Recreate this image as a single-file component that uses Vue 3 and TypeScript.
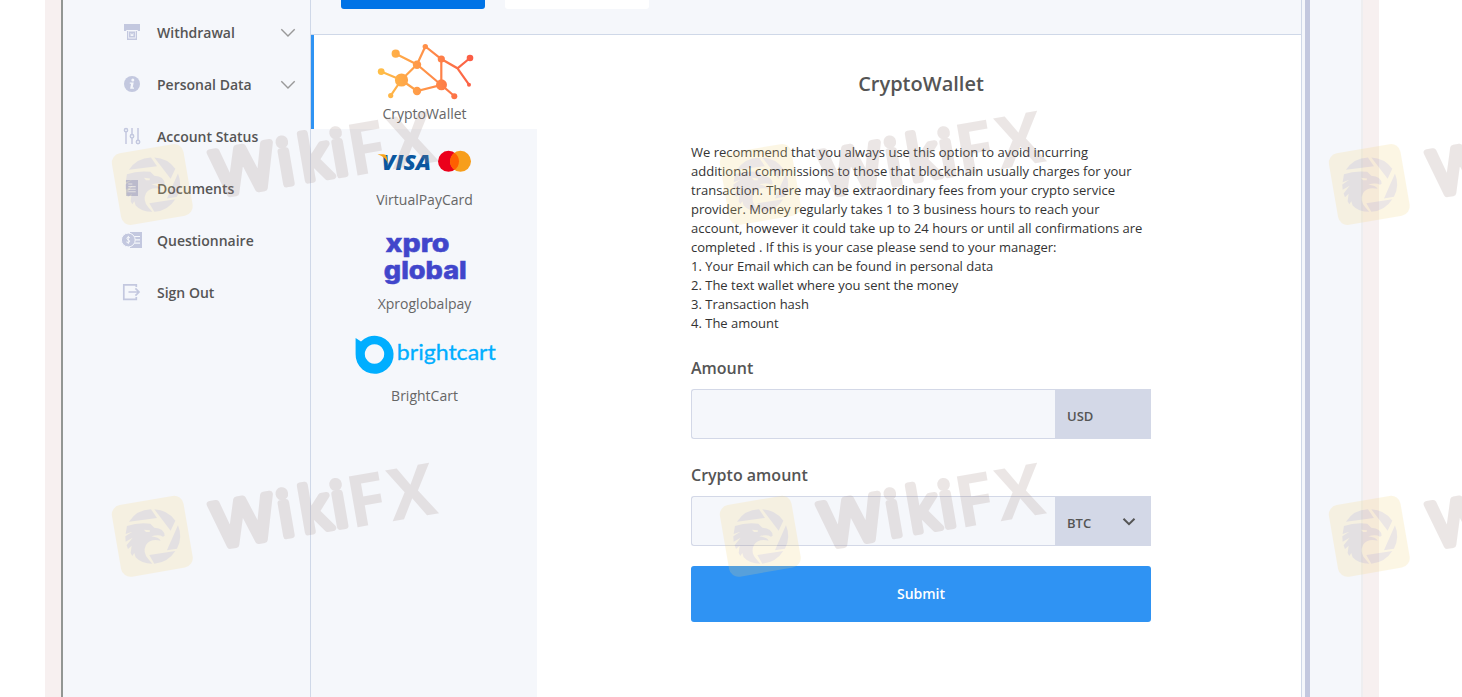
<script setup lang="ts">
interface NavItem { label: string; icon: string; expandable?: boolean }
interface Method { label: string; key: string; viewBox: string; height: number }

const nav: NavItem[] = [
  { label: 'Withdrawal', icon: 'atm', expandable: true },
  { label: 'Personal Data', icon: 'info', expandable: true },
  { label: 'Account Status', icon: 'sliders' },
  { label: 'Documents', icon: 'doc' },
  { label: 'Questionnaire', icon: 'quest' },
  { label: 'Sign Out', icon: 'exit' },
]

const methods: Method[] = [
  { label: 'CryptoWallet', key: 'crypto', viewBox: '314 35 223 69', height: 69 },
  { label: 'VirtualPayCard', key: 'card', viewBox: '314 129 223 61', height: 61 },
  { label: 'Xproglobalpay', key: 'xpro', viewBox: '314 215 223 79', height: 79 },
  { label: 'BrightCart', key: 'bright', viewBox: '314 319 223 67', height: 67 },
]

const notes: string[] = [
  'We recommend that you always use this option to avoid incurring',
  'additional commissions to those that blockchain usually charges for your',
  'transaction. There may be extraordinary fees from your crypto service',
  'provider. Money regularly takes 1 to 3 business hours to reach your',
  'account, however it could take up to 24 hours or until all confirmations are',
  'completed . If this is your case please send to your manager:',
  '1. Your Email which can be found in personal data',
  '2. The text wallet where you sent the money',
  '3. Transaction hash',
  '4. The amount',
]

const marks = [152.3, 760.3, 1369.3].flatMap((x) => [184.5, 536.3].map((y) => ({ x, y })))
</script>

<template>
  <div class="page">
    <div class="strip left"></div>
    <aside class="sidebar">
      <div v-for="item in nav" :key="item.label" class="nav-item">
        <svg class="nav-icon" width="22" height="18" viewBox="0 0 22 18">
          <g v-if="item.icon === 'atm'" fill="#c3c8df">
            <path d="M3 1h16v7h-2.200V7H5.200v1H3z" />
            <path fill-rule="evenodd" d="M6 8h10v9H6zM7.300 8v7.600h7.400V8z" />
            <path fill-rule="evenodd" d="M8 8.600h6v5.800H8zM9.600 10v3h2.800v-3z" />
            <path d="M10.200 9.600h1.600v1.600h-1.600z" />
          </g>
          <g v-else-if="item.icon === 'info'">
            <circle cx="11" cy="9" r="8" fill="#c3c8df" />
            <circle cx="11.800" cy="5" r="1.500" fill="#f5f7fb" />
            <path d="M8.800 7.400h3.900l-1 5h1.300v1.300H9.100l1-5H8.800z" fill="#f5f7fb" />
          </g>
          <g v-else-if="item.icon === 'sliders'" fill="none" stroke="#c3c8df" stroke-width="1.500">
            <path d="M5 5v12M11 1v6.500M11 11v6M17 1v12" />
            <circle cx="5" cy="3.200" r="1.600" /><circle cx="11" cy="9.200" r="1.700" /><circle cx="17" cy="15" r="1.700" />
          </g>
          <g v-else-if="item.icon === 'doc'">
            <path d="M5 1h12v16H5z" fill="#c3c8df" />
            <path d="M7.300 5h4M7.300 7.600h7.400M7.300 10.200h7.400M7.300 12.800h7.400" stroke="#f5f7fb" stroke-width="1.100" />
          </g>
          <g v-else-if="item.icon === 'quest'">
            <path d="M9 1h12v16H9z" fill="#c3c8df" />
            <path d="M12 5.500h7M12 8.800h7M12 12.200h7" stroke="#f5f7fb" stroke-width="1.200" />
            <circle cx="7.300" cy="9" r="6.900" fill="#c3c8df" stroke="#f5f7fb" stroke-width="1" />
            <path d="M9 6.900Q7.300 5.600 6.100 6.700 5.200 8.100 7.200 8.800 9.500 9.600 8.500 11 7.200 12.200 5.300 10.900M7.300 4.900v8" fill="none" stroke="#f5f7fb" stroke-width="1" />
          </g>
          <g v-else fill="none" stroke="#c3c8df" stroke-width="1.700">
            <path d="M15.300 4V1.800H2.800v14.600h12.500V14M7.500 9h10.500M14.400 5.400 18 9l-3.600 3.600" />
          </g>
        </svg>
        <span class="nav-label">{{ item.label }}</span>
        <svg v-if="item.expandable" class="chev" width="16" height="10" viewBox="0 0 16 10">
          <path d="M1.300 1.200 8 8l6.700-6.800" fill="none" stroke="#999" stroke-width="1.400" />
        </svg>
      </div>
    </aside>

    <main class="main">
      <header class="topbar">
        <div class="pill active"></div>
        <div class="pill"></div>
      </header>
      <div class="content">
        <div class="methods">
          <div v-for="(m, i) in methods" :key="m.key" class="method" :class="{ selected: i === 0 }">
            <svg class="method-logo" width="223" :height="m.height" :viewBox="m.viewBox">
              <template v-if="m.key === 'crypto'">
                <defs>
                  <linearGradient id="node-heat" gradientUnits="userSpaceOnUse" x1="378" y1="70" x2="474" y2="60">
                    <stop offset="0" stop-color="#ffbf47" />
                    <stop offset=".5" stop-color="#ff9149" />
                    <stop offset="1" stop-color="#fb5a45" />
                  </linearGradient>
                </defs>
                <path d="M395.700 53.700 417 64.500 425.300 46.500 441.300 59 457.500 68.300 470 58M457.500 68.300 469 84.700M441.300 59V85L417 64.500 401.300 80 381 71.600M401.300 80 390.700 95.700M401.300 80 417 91 441.300 85 454.300 96" fill="none" stroke="url(#node-heat)" stroke-width="2.200" />
                <g fill="url(#node-heat)">
                  <circle cx="395.700" cy="53.700" r="4.100" /><circle cx="417" cy="64.700" r="4.200" /><circle cx="425.300" cy="46.600" r="2.700" />
                  <circle cx="441.300" cy="59" r="3.600" /><circle cx="470" cy="58" r="3.300" /><circle cx="469" cy="84.800" r="2" />
                  <circle cx="441.500" cy="84.800" r="5.500" /><circle cx="454.300" cy="96.200" r="3" /><circle cx="417" cy="91" r="4.200" />
                  <circle cx="401.500" cy="80" r="6.600" /><circle cx="381.200" cy="71.600" r="3.400" /><circle cx="390.700" cy="95.600" r="2.600" />
                </g>
              </template>
              <template v-else-if="m.key === 'card'">
                <text x="381.500" y="169.500" class="visa" textLength="49.500" lengthAdjust="spacingAndGlyphs">VISA</text>
                <path d="M377.500 154.200h6q2.400 0 3 2l1.700 7.200q-3-6.800-10.700-9.200z" fill="#f9a51a" />
                <circle cx="448.500" cy="161.300" r="10.500" fill="#eb001b" />
                <circle cx="460.500" cy="161.300" r="10.500" fill="#f79e1b" />
                <path d="M454.500 152.700a10.500 10.500 0 0 1 0 17.200a10.500 10.500 0 0 1 0-17.200z" fill="#ff5f00" />
              </template>
              <template v-else-if="m.key === 'xpro'">
                <text x="385.500" y="251.500" class="xpro" textLength="64" lengthAdjust="spacingAndGlyphs">xpro</text>
                <text x="383.800" y="279" class="xpro" textLength="83" lengthAdjust="spacingAndGlyphs">global</text>
              </template>
              <template v-else>
                <path fill-rule="evenodd" d="M355.600 338 361 341.500A19 19 0 1 1 355.600 354zM374.500 344.300a9.700 9.700 0 1 0 .01 0z" fill="#00aeff" />
                <text x="396.800" y="359.500" class="bright" textLength="99" lengthAdjust="spacingAndGlyphs">brightcart</text>
              </template>
            </svg>
            <div class="method-label">{{ m.label }}</div>
          </div>
        </div>

        <section class="form">
          <h1 class="title">CryptoWallet</h1>
          <div class="notes">
            <div v-for="line in notes" :key="line">{{ line }}</div>
          </div>
          <div class="field-label">Amount</div>
          <div class="field">
            <div class="input"></div>
            <div class="unit"><span>USD</span></div>
          </div>
          <div class="field-label second">Crypto amount</div>
          <div class="field">
            <div class="input"></div>
            <div class="unit">
              <span>BTC</span>
              <svg class="unit-chev" width="14" height="10" viewBox="0 0 14 10">
                <path d="M1.500 1.700 7 7.200l5.500-5.500" fill="none" stroke="#555" stroke-width="2" />
              </svg>
            </div>
          </div>
          <button class="submit" type="button">Submit</button>
        </section>
      </div>
    </main>

    <div class="edge"></div>
    <div class="scroll"></div>
    <div class="gutter"></div>
    <div class="strip right"></div>

    <svg class="watermarks" width="1462" height="697" viewBox="0 0 1462 697">
      <g v-for="p in marks" :key="`${p.x}-${p.y}`" opacity=".2" :transform="`translate(${p.x} ${p.y})`">
        <g transform="rotate(-9.800)">
          <rect x="-36.300" y="-36.300" width="72.600" height="72.600" rx="9.500" fill="#f5d77d" />
          <g class="wm-round">
            <text x="61.500" y="22.500" textLength="62" lengthAdjust="spacingAndGlyphs">W</text>
            <text x="127" y="22.500">i</text>
            <text x="149" y="22.500" textLength="31" lengthAdjust="spacingAndGlyphs">k</text>
            <text x="181.500" y="22.500">i</text>
          </g>
          <g class="wm-caps">
            <text x="197.500" y="26">F</text>
            <text x="239.500" y="26" textLength="47" lengthAdjust="spacingAndGlyphs">X</text>
          </g>
        </g>
        <g transform="scale(.3333) translate(-156 -243)" fill="#a08782">
          <path d="M86 199A82 82 0 0 1 152 162L170 188Z" />
          <path d="M162 162A82 82 0 0 1 225 196L211 226Z" />
          <path d="M233 210A82 82 0 0 1 230 280L200 285Z" />
          <path d="M225 287A82 82 0 0 1 162 325L147 299Z" />
          <path fill-rule="evenodd" d="M80 212Q112 201 150 205L162 217Q192 219 193 241L188 244Q176 236 153 243 176 246 181 256 150 249 137 269 126 291 144 311L156 325Q123 325 106 306L102 293 96 302 91 293 94 271 83 281 79 270 97 247 76 259 75 243 96 229 76 236ZM131 223 149 225 148 230 137 230Z" />
        </g>
      </g>
    </svg>
  </div>
</template>

<style>
body { margin: 0; background: #fff; overflow: hidden; }
</style>

<style scoped>
.page {
  position: relative;
  display: flex;
  width: 1462px;
  height: 697px;
  padding-left: 45px;
  box-sizing: border-box;
  overflow: hidden;
  background: #fff;
  font-family: "Open Sans", "Noto Sans", sans-serif;
  color: #555;
}
.strip { width: 16px; background: #f7f0f0; flex: none; }
.sidebar {
  width: 250px;
  flex: none;
  box-sizing: border-box;
  padding-top: 7px;
  border-left: 2px solid #929693;
  border-right: 1px solid #cfd8e8;
  background: #f5f7fb;
}
.nav-item { display: flex; align-items: center; height: 52px; padding: 0 14px 0 58px; }
.nav-icon { flex: none; margin: -2px 14px 0 0; }
.nav-label { flex: 1; margin-top: -2px; font-size: 14px; font-weight: 600; white-space: nowrap; }
.chev { flex: none; }
.main { width: 990px; flex: none; display: flex; flex-direction: column; }
.topbar {
  display: flex;
  gap: 20px;
  height: 34px;
  padding-left: 30px;
  border-bottom: 1px solid #cfd8e8;
  background: #f5f7fb;
}
.pill { width: 144px; height: 9px; border-radius: 0 0 3px 3px; background: #fff; }
.pill.active { background: #0073e6; }
.content { flex: 1; display: flex; background: #fff; }
.methods { width: 226px; background: #f5f7fb; }
.method { padding-bottom: 5px; border-left: 3px solid transparent; }
.method.selected { background: #fff; border-left-color: #2f93f3; }
.method-logo { display: block; }
.method-label { padding-right: 2px; font-size: 14px; line-height: 20px; text-align: center; color: #666; }
.visa { font: italic 800 21px "Open Sans", sans-serif; fill: #0a57a0; }
.xpro { font: 800 25px "Inter", sans-serif; fill: #4146cb; stroke: #4146cb; stroke-width: .5; }
.bright { font: 400 22px "Lato", sans-serif; fill: #00aeff; stroke: #00aeff; stroke-width: .3; }
.form { width: 460px; margin-left: 154px; }
.title { margin: 34px 0 45px; font-size: 20px; line-height: 29px; font-weight: 600; text-align: center; }
.notes { height: 190px; font-size: 13px; line-height: 19px; color: #333; white-space: nowrap; }
.field-label { margin: 23px 0 9px; font-size: 16px; line-height: 24px; font-weight: 600; }
.field-label.second { margin-top: 24px; }
.field { display: flex; height: 50px; }
.input {
  flex: 1;
  border: 1px solid #d3d8e7;
  border-right: 0;
  border-radius: 3px 0 0 3px;
  background: #f5f7fb;
}
.unit {
  display: flex;
  justify-content: space-between;
  align-items: center;
  width: 96px;
  box-sizing: border-box;
  padding: 4px 15px 0 12px;
  background: #d3d8e7;
  font-size: 13px;
  font-weight: 600;
}
.unit-chev { margin-top: -2px; }
.submit {
  display: block;
  width: 460px;
  height: 56px;
  margin-top: 20px;
  padding: 0 0 2px;
  border: 0;
  border-radius: 3px;
  background: #2f93f3;
  color: #fff;
  font: 600 14px "Open Sans", sans-serif;
}
.edge { width: 3px; border-left: 1px solid #cfd8e8; background: #f5f7fb; flex: none; }
.scroll { width: 5px; background: #c3c8df; flex: none; }
.gutter { width: 51px; border-right: 2px solid #eeeef0; background: #f5f7fb; flex: none; }
.watermarks { position: absolute; left: 0; top: 0; pointer-events: none; }
.wm-round text {
  font: 500 62px "Open Sans", sans-serif;
  fill: #a08782;
  stroke: #a08782;
  stroke-width: 6.5;
  stroke-linejoin: round;
}
.wm-caps text { font: 700 72px "Open Sans", sans-serif; fill: #a08782; }
</style>
